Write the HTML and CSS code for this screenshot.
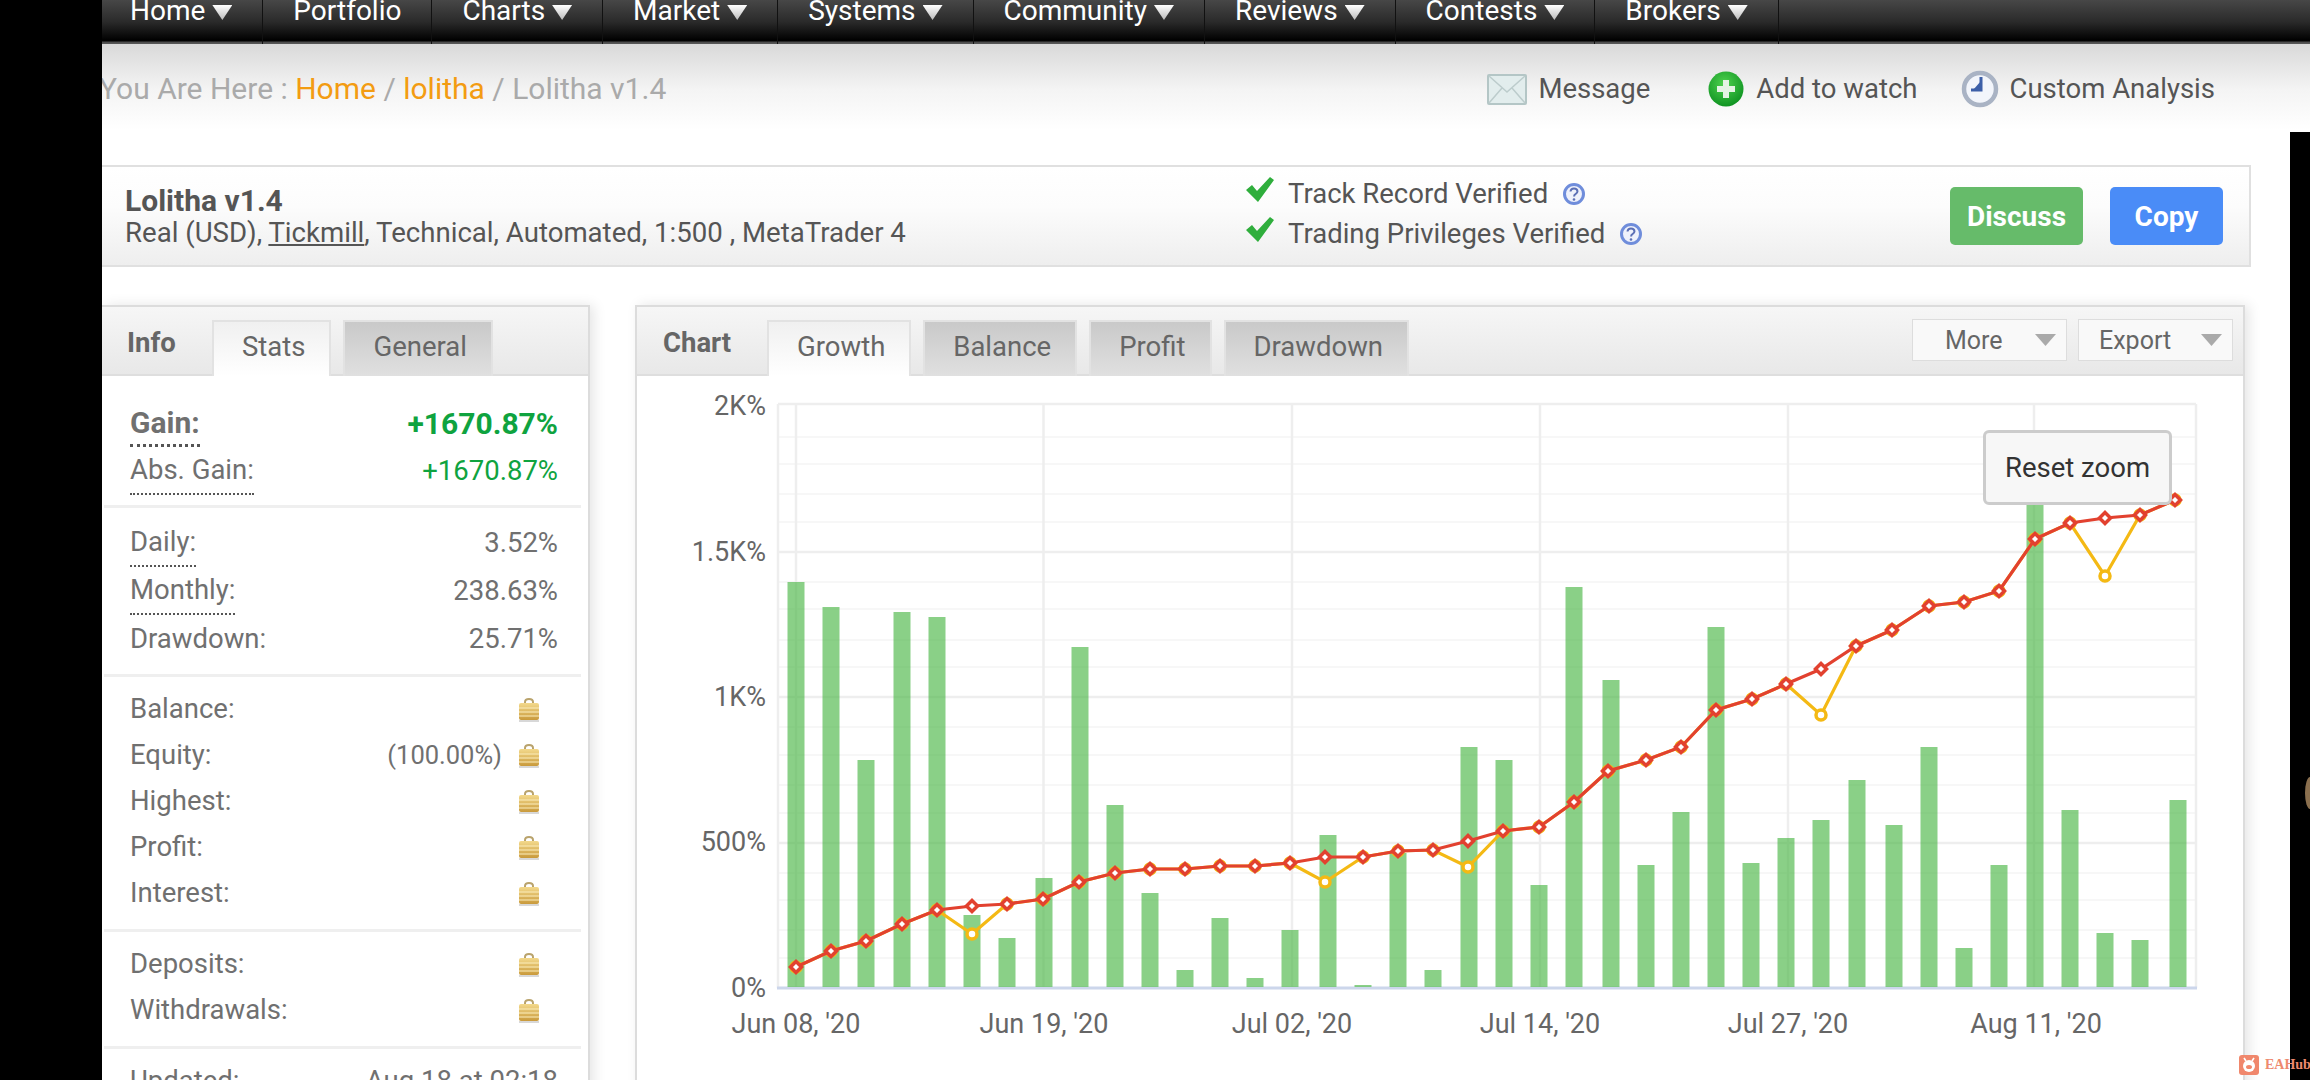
FILE: index.html
```html
<!DOCTYPE html>
<html lang="en">
<head>
    <meta charset="UTF-8">
    <title>Lolitha v1.4 - Systems</title>
    <link rel="stylesheet" href="styles.css">
</head>
<body>
    <svg class="icon-defs" width="0" height="0">
        <defs>
            <linearGradient id="lock-gold" x1="0" y1="0" x2="0" y2="1">
                <stop offset="0" stop-color="#f3d98c"/>
                <stop offset="1" stop-color="#c99a3c"/>
            </linearGradient>
            <radialGradient id="plus-green" cx="0.45" cy="0.35" r="0.7">
                <stop offset="0" stop-color="#4fd24f"/>
                <stop offset="1" stop-color="#0b8f1f"/>
            </radialGradient>
            <marker id="dot-red" viewBox="-10 -10 20 20" markerWidth="20" markerHeight="20" markerUnits="userSpaceOnUse">
                <path d="M0-5.500 5.500 0 0 5.500-5.500 0Z" fill="#fff" stroke="#e2412f" stroke-width="3.500"/>
            </marker>
            <marker id="dot-yellow" viewBox="-10 -10 20 20" markerWidth="20" markerHeight="20" markerUnits="userSpaceOnUse">
                <circle r="5" fill="#fff" stroke="#f4b914" stroke-width="3.500"/>
            </marker>
            <symbol id="lock" viewBox="0 0 22 25">
                <path d="M7 8V5q0-3 4-3t4 3v3" fill="none" stroke="#b9a36c" stroke-width="2"/>
                <rect x="1" y="6" width="20" height="17" rx="2" fill="url(#lock-gold)"/>
                <path d="M1 11h20M1 15h20M1 19h20" stroke="#fbeebc" stroke-width="1.200"/>
                <path d="M1 24h20" stroke="#999" stroke-width="1.500" opacity=".5"/>
            </symbol>
            <symbol id="tick" viewBox="0 0 30 27">
                <path d="M1 14 7 9l5 6L25 1l4 3-16 22Z" fill="#2fae3c"/>
            </symbol>
            <symbol id="help" viewBox="0 0 24 24">
                <circle cx="12" cy="12" r="9.500" fill="#eef1fb" stroke="#6f8ddb" stroke-width="3"/>
                <path d="M8.500 9.500q.3-3 3.500-3t3.500 2.800q0 1.800-2 2.800-1.400.7-1.400 2.400" fill="none" stroke="#5b6fb5" stroke-width="2"/>
                <circle cx="12" cy="17.500" r="1.300" fill="#5b6fb5"/>
            </symbol>
        </defs>
    </svg>

    <div class="page">
        <nav class="topnav">
            <a class="nav-item">Home<i class="caret"></i></a>
            <a class="nav-item">Portfolio</a>
            <a class="nav-item">Charts<i class="caret"></i></a>
            <a class="nav-item">Market<i class="caret"></i></a>
            <a class="nav-item">Systems<i class="caret"></i></a>
            <a class="nav-item">Community<i class="caret"></i></a>
            <a class="nav-item">Reviews<i class="caret"></i></a>
            <a class="nav-item">Contests<i class="caret"></i></a>
            <a class="nav-item">Brokers<i class="caret"></i></a>
        </nav>

        <div class="crumb-row">
            <div class="crumbs">You Are Here : <a>Home</a> / <a>lolitha</a> / Lolitha v1.4</div>
            <div class="actions">
                <a class="action action-message">
                    <svg width="40" height="31" viewBox="0 0 40 31">
                        <rect x="1" y="1" width="38" height="29" rx="1" fill="#e2eded" stroke="#b4c6c6" stroke-width="2"/>
                        <path d="M2 2 20 18 38 2M2 29 15 14M38 29 25 14" fill="none" stroke="#bccccc" stroke-width="1.500"/>
                    </svg>
                    Message
                </a>
                <a class="action">
                    <svg width="38" height="38" viewBox="0 0 38 38">
                        <circle cx="19" cy="19" r="17.500" fill="url(#plus-green)"/>
                        <path d="M19 10v18M10 19h18" stroke="#e4f3e4" stroke-width="6"/>
                    </svg>
                    Add to watch
                </a>
                <a class="action">
                    <svg width="38" height="38" viewBox="0 0 38 38">
                        <circle cx="19" cy="19" r="16" fill="#f2f5fb" stroke="#a9b3c4" stroke-width="4.500"/>
                        <path d="M20 7v13H10" fill="none" stroke="#3c5fa8" stroke-width="3"/>
                        <path d="M20 11l-8 9h8Z" fill="#3c5fa8"/>
                    </svg>
                    Custom Analysis
                </a>
            </div>
        </div>

        <section class="summary">
            <div class="summary-info">
                <h1 class="system-name">Lolitha v1.4</h1>
                <div class="system-meta">Real (USD), <u>Tickmill</u>, Technical, Automated, 1:500 , MetaTrader 4</div>
            </div>
            <div class="verified">
                <div class="verified-row"><svg class="tick"><use href="#tick"/></svg>Track Record Verified<svg class="help"><use href="#help"/></svg></div>
                <div class="verified-row"><svg class="tick"><use href="#tick"/></svg>Trading Privileges Verified<svg class="help"><use href="#help"/></svg></div>
            </div>
            <div class="summary-buttons">
                <button class="btn btn-discuss">Discuss</button>
                <button class="btn btn-copy">Copy</button>
            </div>
        </section>

        <div class="columns">
            <aside class="panel stats-panel">
                <div class="panel-head">
                    <span class="panel-title">Info</span>
                    <a class="tab tab-active">Stats</a>
                    <a class="tab">General</a>
                </div>
                <div class="stat-group stat-group-first">
                    <div class="stat-row stat-strong"><span class="stat-label dotted">Gain:</span><span class="up">+1670.87%</span></div>
                    <div class="stat-row stat-tall"><span class="stat-label dotted thin">Abs. Gain:</span><span class="up">+1670.87%</span></div>
                </div>
                <div class="stat-group stat-group-rates">
                    <div class="stat-row stat-tall"><span class="stat-label dotted thin">Daily:</span><span>3.52%</span></div>
                    <div class="stat-row stat-tall"><span class="stat-label dotted thin">Monthly:</span><span>238.63%</span></div>
                    <div class="stat-row stat-tall"><span class="stat-label">Drawdown:</span><span>25.71%</span></div>
                </div>
                <div class="stat-group">
                    <div class="stat-row"><span class="stat-label">Balance:</span><svg class="lock"><use href="#lock"/></svg></div>
                    <div class="stat-row"><span class="stat-label">Equity:</span><span class="stat-locked"><span class="stat-small">(100.00%)</span><svg class="lock"><use href="#lock"/></svg></span></div>
                    <div class="stat-row"><span class="stat-label">Highest:</span><svg class="lock"><use href="#lock"/></svg></div>
                    <div class="stat-row"><span class="stat-label">Profit:</span><svg class="lock"><use href="#lock"/></svg></div>
                    <div class="stat-row"><span class="stat-label">Interest:</span><svg class="lock"><use href="#lock"/></svg></div>
                </div>
                <div class="stat-group">
                    <div class="stat-row"><span class="stat-label">Deposits:</span><svg class="lock"><use href="#lock"/></svg></div>
                    <div class="stat-row"><span class="stat-label">Withdrawals:</span><svg class="lock"><use href="#lock"/></svg></div>
                </div>
                <div class="stat-group">
                    <div class="stat-row"><span class="stat-label">Updated:</span><span>Aug 18 at 02:18</span></div>
                </div>
            </aside>

            <main class="panel chart-panel">
                <div class="panel-head">
                    <span class="panel-title">Chart</span>
                    <a class="tab tab-active">Growth</a>
                    <a class="tab">Balance</a>
                    <a class="tab">Profit</a>
                    <a class="tab">Drawdown</a>
                    <div class="head-menus">
                        <a class="menu menu-more">More<i class="menu-caret"></i></a>
                        <a class="menu menu-export">Export<i class="menu-caret"></i></a>
                    </div>
                </div>
                <div class="chart-body">
                    <svg class="chart" width="1606" height="704" viewBox="637 376 1606 704">
                        <path class="grid-minor" d="M778 437H2196M778 464H2196M778 494H2196M778 522H2196M778 582H2196M778 609H2196M778 640H2196M778 667H2196M778 727H2196M778 755H2196M778 785H2196M778 813H2196M778 873H2196M778 900H2196M778 930H2196M778 958H2196"/>
                        <path class="grid-major" d="M778 404H2196M778 552H2196M778 697H2196M778 843H2196M778 404V988M2196 404V988M796 404V988M1043.500 404V988M1292 404V988M1540 404V988M1788 404V988M2034 404V988"/>
                        <path class="axis" d="M777 988H2197"/>
                        <path class="bars" d="M796 582V987M831 607V987M866 760V987M902 612V987M937 617V987M972 915V987M1007 938V987M1044 878V987M1080 647V987M1115 805V987M1150 893V987M1185 970V987M1220 918V987M1255 978V987M1290 930V987M1328 835V987M1363 985V987M1398 853V987M1433 970V987M1469 747V987M1504 760V987M1539 885V987M1574 587V987M1611 680V987M1646 865V987M1681 812V987M1716 627V987M1751 863V987M1786 838V987M1821 820V987M1857 780V987M1894 825V987M1929 747V987M1964 948V987M1999 865V987M2035 480V987M2070 810V987M2105 933V987M2140 940V987M2178 800V987"/>
                        <polyline class="line-yellow" points="796,967 831,951 866,941 902,924 937,910 972,934 1007,904 1043,899 1079,882 1115,873 1150,869 1185,869 1220,866 1255,866 1290,863 1325,882 1363,857 1398,851 1433,850 1468,867 1503,831 1539,827 1574,802 1608,771 1646,760 1681,747 1716,710 1752,699 1786,684 1821,715 1856,646 1892,630 1929,606 1964,602 1999,591 2035,539 2070,523 2105,576 2140,515 2175,500"/>
                        <polyline class="line-red" points="796,967 831,951 866,941 902,924 937,910 972,906 1007,904 1043,899 1079,882 1115,873 1150,869 1185,869 1220,866 1255,866 1290,863 1325,857 1363,857 1398,851 1433,850 1468,841 1503,831 1539,827 1574,802 1608,771 1646,760 1681,747 1716,710 1752,699 1786,684 1821,669 1856,646 1892,630 1929,606 1964,602 1999,591 2035,539 2070,523 2105,518 2140,515 2175,500"/>
                        <g class="y-labels">
                            <text x="766" y="415">2K%</text>
                            <text x="766" y="561">1.5K%</text>
                            <text x="766" y="706">1K%</text>
                            <text x="766" y="851">500%</text>
                            <text x="766" y="997">0%</text>
                        </g>
                        <g class="x-labels">
                            <text x="796" y="1033">Jun 08, '20</text>
                            <text x="1044" y="1033">Jun 19, '20</text>
                            <text x="1292" y="1033">Jul 02, '20</text>
                            <text x="1540" y="1033">Jul 14, '20</text>
                            <text x="1788" y="1033">Jul 27, '20</text>
                            <text x="2036" y="1033">Aug 11, '20</text>
                        </g>
                    </svg>
                    <button class="reset-zoom">Reset zoom</button>
                </div>
            </main>
        </div>
    </div>

    <div class="edge-band"><i class="edge-mark"></i></div>

    <div class="watermark">
        <svg width="20" height="20" viewBox="0 0 20 20">
            <rect width="20" height="20" rx="3" fill="#f0876c"/>
            <path d="M5 3 7 6M15 3 13 6" stroke="#fff" stroke-width="1.600"/>
            <circle cx="10" cy="11" r="6" fill="#fff"/>
            <ellipse cx="10" cy="12" rx="3" ry="2" fill="#f0876c"/>
        </svg>
        <span>EAHub</span>
    </div>
</body>
</html>
```

FILE: styles.css
```css
html, body {
    margin: 0;
    height: 1080px;
    overflow: hidden;
}

body {
    position: relative;
    background: #000;
    font-family: Roboto, "Liberation Sans", sans-serif;
    font-size: 27.500px;
    color: #666;
}

.icon-defs {
    position: absolute;
}

.page {
    margin-left: 102px;
    height: 1080px;
    overflow: hidden;
    background: linear-gradient(#d9d9d9 44px, #f4f4f4 90px, #fff 130px);
}

/* Top menu */
.topnav {
    display: flex;
    height: 44px;
    overflow: hidden;
    background: linear-gradient(#474747, #2a2a2a 50%, #000 92%, #555 97%);
}

.nav-item {
    display: flex;
    align-items: flex-end;
    gap: 7px;
    height: 44px;
    padding: 0 30px 16px 30px;
    box-sizing: border-box;
    border-right: 1px solid #111;
    font-size: 28px;
    line-height: 34px;
    color: #fff;
    white-space: nowrap;
}

.nav-item:first-child {
    padding-left: 28px;
}

.caret {
    width: 20px;
    height: 15px;
    margin-bottom: 8px;
    background: linear-gradient(#fff, #bbb);
    clip-path: polygon(0 0, 100% 0, 50% 100%);
}

/* Breadcrumb */
.crumb-row {
    display: flex;
    justify-content: space-between;
    height: 121px;
    padding: 28px 95px 0 0;
    box-sizing: border-box;
    line-height: 34px;
}

.crumbs {
    margin-left: -3px;
    font-size: 30px;
    color: #aaa;
}

.crumbs a {
    color: #f39c12;
}

.actions {
    display: flex;
    align-items: flex-start;
    gap: 43px;
    margin-top: -2px;
    color: #555;
}

.action {
    display: flex;
    align-items: center;
    gap: 11px;
    height: 38px;
}

.action-message {
    margin-right: 14px;
}

/* Account summary */
.summary {
    display: flex;
    align-items: center;
    height: 102px;
    margin-right: 59px;
    box-sizing: border-box;
    padding-left: 23px;
    border: 2px solid #e0e0e0;
    border-left: none;
    background: linear-gradient(#fff, #fcfcfc 40%, #eee);
    color: #555;
}

.summary-info {
    width: 1120px;
}

.system-name {
    margin: 0;
    font-size: 30px;
    line-height: 34px;
    font-weight: 700;
}

.system-meta {
    font-size: 27.600px;
    line-height: 30px;
}

.verified {
    margin-top: -5px;
}

.verified-row {
    display: flex;
    align-items: center;
    height: 40px;
}

.tick {
    width: 30px;
    height: 27px;
    margin: -8px 13px 0 0;
}

.help {
    width: 24px;
    height: 24px;
    margin-left: 14px;
}

.summary-buttons {
    display: flex;
    gap: 27px;
    margin-left: auto;
    margin-right: 26px;
}

.btn {
    height: 58px;
    border: none;
    border-radius: 5px;
    color: #fff;
    font: 700 28px Roboto, sans-serif;
}

.btn-discuss {
    width: 133px;
    background: #66bb6a;
}

.btn-copy {
    width: 113px;
    background: #4a8cf7;
}

/* Panels */
.columns {
    display: flex;
    gap: 45px;
    margin-top: 38px;
    align-items: flex-start;
}

.panel {
    height: 800px;
    box-sizing: border-box;
    border: 2px solid #dcdcdc;
    border-left: none;
    background: #fff;
    box-shadow: 4px 0 12px rgba(0, 0, 0, 0.1);
}

.stats-panel {
    width: 488px;
}

.chart-panel {
    width: 1610px;
    border-left: 2px solid #dcdcdc;
    position: relative;
}

.panel-head {
    display: flex;
    align-items: flex-end;
    height: 69px;
    box-sizing: border-box;
    padding-left: 26px;
    border-bottom: 2px solid #dedede;
    background: linear-gradient(#f6f6f6, #e8e8e8);
}

.panel-title {
    width: 84px;
    align-self: flex-start;
    padding-top: 20px;
    font-weight: 700;
    line-height: 32px;
}

.stats-panel .panel-title {
    margin-left: -1px;
    margin-right: 1px;
}

.chart-panel .panel-title {
    width: 104px;
}

.tab {
    height: 56px;
    margin-bottom: -2px;
    margin-right: 12px;
    box-sizing: border-box;
    padding: 8px 24px 0 28px;
    border: 2px solid #e2e2e2;
    border-bottom: none;
    background: linear-gradient(#c9c9c9, #e0e0e0);
    line-height: 34px;
    white-space: nowrap;
}

.tab-active {
    background: linear-gradient(#f0f0f0, #fff);
}

.head-menus {
    display: flex;
    gap: 11px;
    margin-left: auto;
    margin-right: 10px;
    margin-bottom: 13px;
    font-size: 25px;
}

.menu {
    display: flex;
    align-items: center;
    justify-content: space-between;
    width: 155px;
    height: 42px;
    box-sizing: border-box;
    padding: 0 10px 0 20px;
    border: 1px solid #ddd;
    background: #f9f9f9;
}

.menu-more {
    padding-left: 32px;
}

.menu-caret {
    width: 21px;
    height: 12px;
    background: #aaa;
    clip-path: polygon(0 0, 100% 0, 50% 100%);
}

/* Stats list */
.stat-group {
    margin: 0 7px 0 2px;
    padding: 9px 23px 13px 26px;
    border-bottom: 3px solid #efefef;
}

.stat-group:last-child {
    border-bottom: none;
}

.stat-group-first {
    padding-top: 25px;
    padding-bottom: 10px;
}

.stat-group-rates {
    padding-top: 11px;
    padding-bottom: 11px;
}

.stat-row {
    display: flex;
    justify-content: space-between;
    align-items: center;
    height: 46px;
    line-height: 32px;
    color: #707070;
}

.stat-tall {
    height: 48px;
}

.stat-label {
    height: 100%;
    box-sizing: border-box;
    display: flex;
    align-items: center;
}

.dotted {
    border-bottom: 3px dotted #555;
}

.dotted.thin {
    border-bottom-width: 2px;
}

.stat-strong {
    font-size: 30px;
    font-weight: 700;
}

.stat-small {
    font-size: 25.500px;
}

.up {
    color: #0fa33f;
}

.lock {
    width: 22px;
    height: 25px;
    margin-right: 18px;
}

.stat-locked {
    display: flex;
    align-items: center;
    gap: 16px;
}

/* Chart */
.chart-body {
    position: relative;
}

.chart {
    display: block;
}

.grid-minor {
    stroke: #f7f7f7;
    stroke-width: 2;
    fill: none;
}

.grid-major {
    stroke: #eeeeee;
    stroke-width: 2.500;
    fill: none;
}

.axis {
    stroke: #ccd6eb;
    stroke-width: 3;
}

.bars {
    stroke: #4db849;
    stroke-opacity: 0.66;
    stroke-width: 17;
    fill: none;
}

.line-yellow,
.line-red {
    fill: none;
    stroke-width: 3.200;
}

.line-yellow {
    stroke: #f4b914;
    marker: url(#dot-yellow);
}

.line-red {
    stroke: #e2412f;
    marker: url(#dot-red);
}

.y-labels text {
    font-size: 27px;
    fill: #666;
    text-anchor: end;
}

.x-labels text {
    font-size: 27px;
    fill: #666;
    text-anchor: middle;
}

.reset-zoom {
    position: absolute;
    left: 1346px;
    top: 54px;
    width: 189px;
    height: 75px;
    border: 3px solid #ccc;
    border-radius: 6px;
    background: #f7f7f7;
    color: #333;
    font: 27.500px Roboto, sans-serif;
}

/* Bits of the device screen around the page */
.edge-band {
    position: absolute;
    left: 2290px;
    top: 132px;
    width: 20px;
    height: 948px;
    background: #000;
}

.edge-mark {
    position: absolute;
    left: 15px;
    top: 645px;
    width: 10px;
    height: 32px;
    border-radius: 50%;
    background: #8a6f4e;
}

.watermark {
    position: absolute;
    left: 2239px;
    top: 1055px;
    display: flex;
    align-items: center;
    gap: 6px;
    font: 700 14px "Liberation Serif", serif;
    color: #ee8a6f;
}
```
